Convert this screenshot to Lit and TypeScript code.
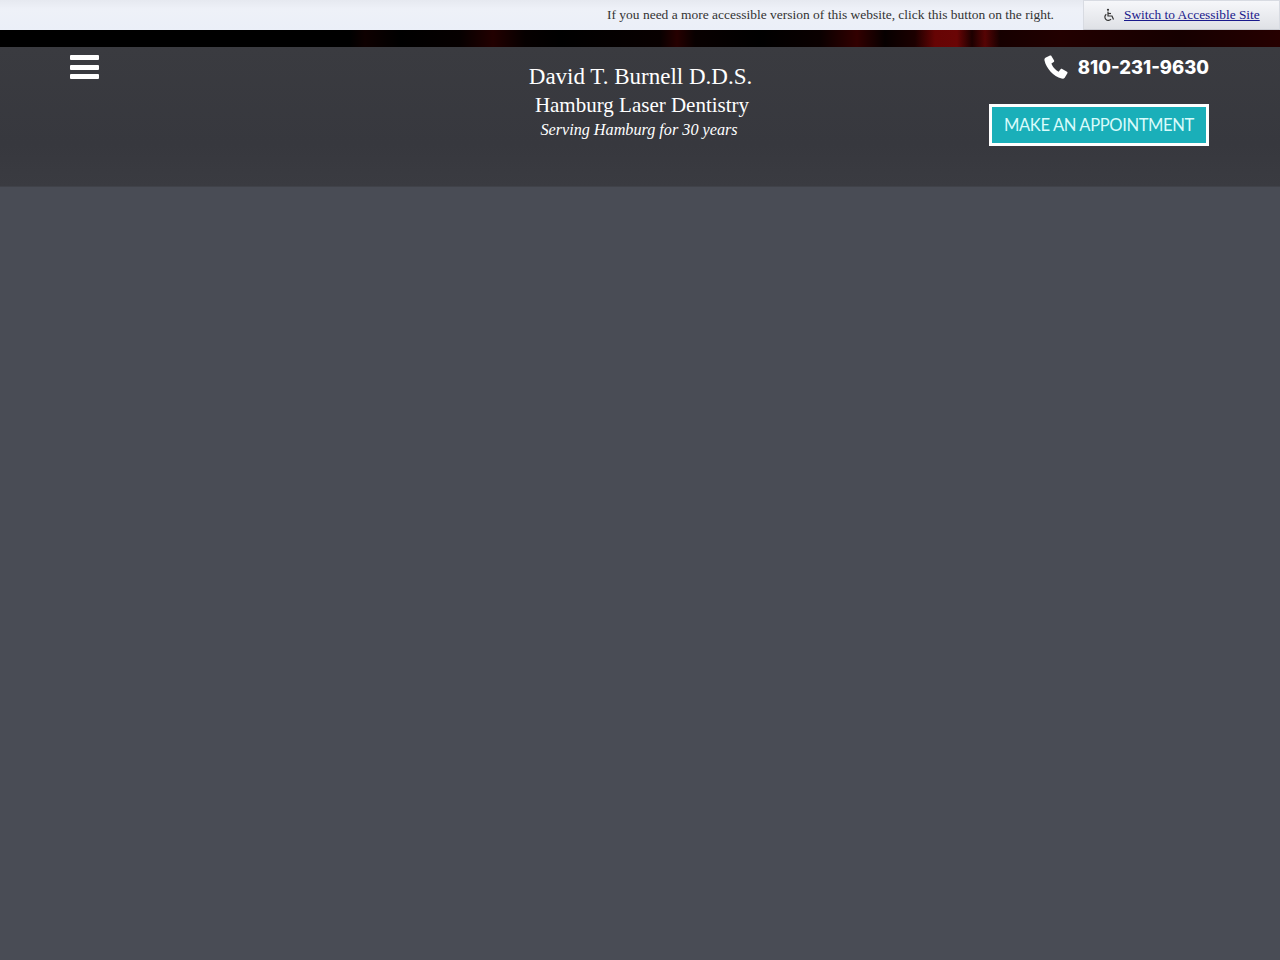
import { LitElement, html, css } from "lit";
import { customElement } from "lit/decorators.js";

@customElement("app-root")
export class AppRoot extends LitElement {
  static styles = css`
    :host { display: block; min-height: 960px; background: #494c55; font-family: "Liberation Serif", serif; }
    .topbar { height: 30px; display: flex; justify-content: flex-end; align-items: stretch; background: linear-gradient(#e6e9f0, #eef1f8 30%, #ebeff8); }
    .notice { align-self: center; font-size: 13.47px; color: #333; margin-right: 29px; }
    .switch { width: 197px; box-sizing: border-box; padding-left: 18px; display: flex; align-items: center; gap: 8px; border: 1px solid #d8dbe2; border-bottom: 1px solid #c9ccd3; background: linear-gradient(#f6f7fa, #dfe1e6); }
    .switch svg { width: 14px; height: 14px; flex: none; }
    .switch a { font-size: 13.4px; color: #1a1a8c; text-decoration: underline; }
    .strip { height: 17px; background: linear-gradient(90deg, #000 0, #000 350px, #0e0000 365px, #000 400px, #060000 460px, #220000 493px, #060000 525px, #000 560px, #080000 660px, #260000 677px, #080000 695px, #000 760px, #0a0000 820px, #320000 857px, #060000 885px, #1c0000 915px, #660404 935px, #6a0505 957px, #1c0000 972px, #560404 985px, #160000 1000px, #220000 1060px, #160000 1180px, #260000 1280px); }
    .header { height: 140px; box-sizing: border-box; padding: 8px 71px 0 70px; background: linear-gradient(#3a3b40, #37383e 70%, #3a3b41); display: grid; grid-template-columns: 1fr auto 1fr; color: #fff; border-bottom: 1px solid #404249; }
    .burger { display: flex; flex-direction: column; gap: 4.5px; width: 29px; }
    .burger span { display: block; height: 5px; background: #fff; border-radius: 1px; }
    .brand { display: flex; flex-direction: column; align-items: center; padding-top: 8px; }
    .b1 { font-size: 23px; line-height: 28px; margin-left: 2px; }
    .b2 { font-size: 21px; line-height: 28px; margin-left: 5px; }
    .b3 { font-size: 16.2px; line-height: 22px; margin-left: -1px; font-style: italic; }
    .right { display: flex; flex-direction: column; align-items: flex-end; }
    .phone { display: flex; align-items: center; gap: 10px; height: 24px; font: 800 18.4px "Inter", sans-serif; }
    .phone svg { width: 24px; height: 24px; }
    .btn { margin-top: 25px; box-sizing: border-box; width: 220px; height: 42px; padding-bottom: 1px; display: flex; align-items: center; justify-content: center; background: #1aafb9; border: 3px solid #fff; font: 400 16.6px "Lato", sans-serif; color: #d8fbfb; letter-spacing: -0.4px; }
  `;

  render() {
    return html`
      <div class="topbar">
        <span class="notice">If you need a more accessible version of this website, click this button on the right.</span>
        <div class="switch">
          <svg viewBox="0 0 14 14" fill="none" stroke="#333" stroke-width="1.2">
            <circle cx="6" cy="1.8" r="1.1" fill="#333" stroke="none"></circle>
            <path d="M6 3.5V8H10L11.5 11.5"></path>
            <path d="M6 5.5H9"></path>
            <path d="M4.3 6.2A3.4 3.4 0 1 0 9 11"></path>
          </svg>
          <a href="#">Switch to Accessible Site</a>
        </div>
      </div>
      <div class="strip"></div>
      <div class="header">
        <div class="burger"><span></span><span></span><span></span></div>
        <div class="brand">
          <div class="b1">David T. Burnell D.D.S.</div>
          <div class="b2">Hamburg Laser Dentistry</div>
          <div class="b3">Serving Hamburg for 30 years</div>
        </div>
        <div class="right">
          <div class="phone">
            <svg viewBox="0 0 24 24" fill="#fff"><path d="M6 0.6 L1.9 2.4 C0.6 3 0.2 4.2 0.5 5.6 C2.2 13.5 9.5 21.5 17.6 23.6 C19.2 24 20.4 23.4 21 22.2 L23.4 18.3 C23.7 17.7 23.5 17.1 23 16.8 L18.2 13.9 C17.6 13.6 17 13.7 16.6 14.2 L14.6 16.7 C11.6 15.5 8.6 11.8 7.4 8.6 L9.7 7 C10.2 6.6 10.3 6 10.1 5.4 L7.4 1 C7.1 0.5 6.5 0.4 6 0.6 Z"></path></svg>
            <span>810-231-9630</span>
          </div>
          <div class="btn">MAKE AN APPOINTMENT</div>
        </div>
      </div>
    `;
  }
}
